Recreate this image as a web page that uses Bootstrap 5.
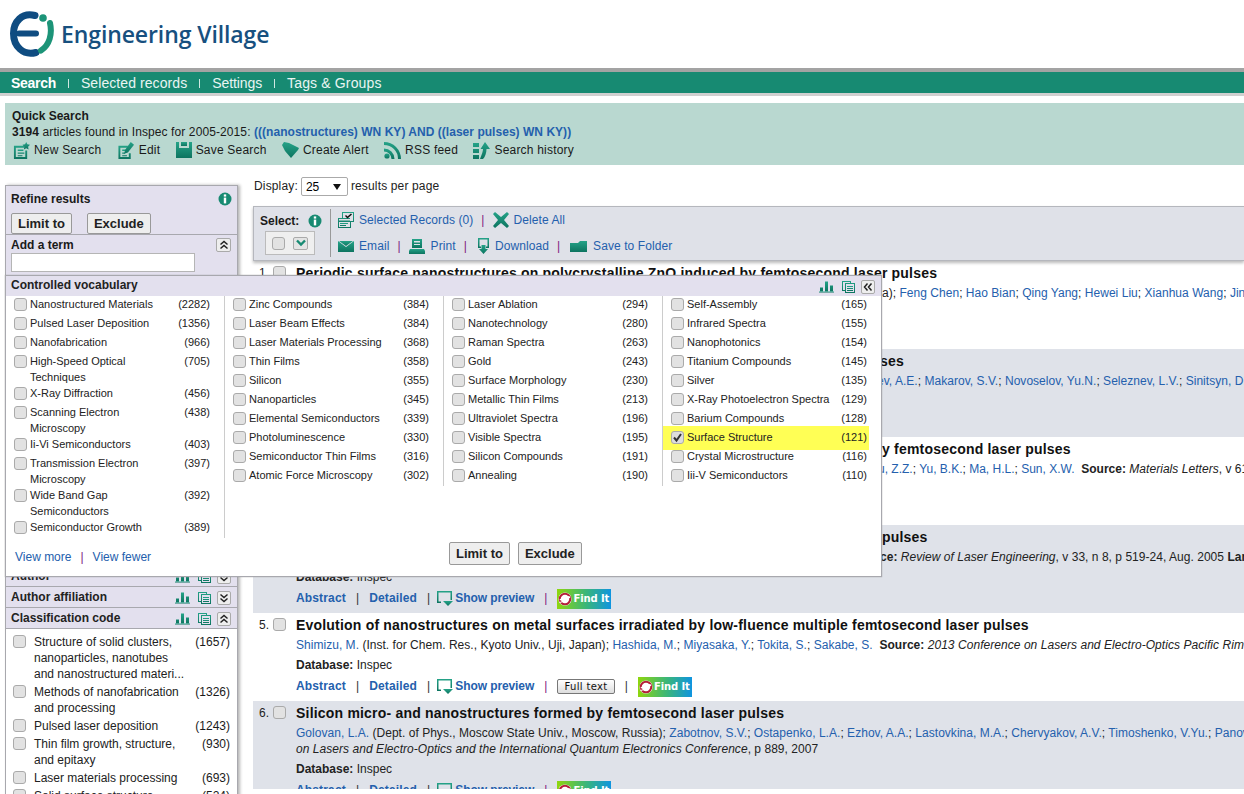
<!DOCTYPE html>
<html lang="en">
<head>
<meta charset="utf-8">
<title>Engineering Village</title>
<link href="https://cdn.jsdelivr.net/npm/bootstrap@5.3.0/dist/css/bootstrap.min.css" rel="stylesheet">
<style>
html,body{height:794px;overflow:hidden}
body{font-family:"Liberation Sans",Arial,sans-serif;font-size:12px;line-height:16px;color:#1a1a1a;background:#fff;position:relative}
a{color:#2460ad;text-decoration:none}
b{font-weight:700}
.defs{position:absolute;width:0;height:0}
.ic{fill:url(#tg);flex:none;display:block}
.logo-row{height:68px;padding:10px 0 0 8px}
.logo-word{font-family:"Open Sans",sans-serif;font-weight:600;font-size:23px;line-height:30px;color:#17507f;margin:9px 0 0 6px;letter-spacing:-.1px}
.top-nav{height:28px;border-top:4px solid #a3a3a3;border-bottom:3px solid #d0d0d0;background:#178a72;padding-left:11px;font-size:14px;line-height:20px;color:#fff}
.top-nav a{color:#e9f5f2;letter-spacing:.08px}
.top-nav a.on{color:#fff;font-weight:700;letter-spacing:-.3px}
.top-nav a.nav-set{letter-spacing:-.1px}
.top-nav a.nav-tag{letter-spacing:.15px}
.top-nav i{width:1px;height:9px;background:#cfe8e2;margin:1px 12px 0}
.qs{margin:7px 0 0 5px;height:62px;background:#b9d8d0;padding:5px 7px}
.qs a{font-weight:700}
.qs-line{letter-spacing:.1px}
.qs-line a{letter-spacing:.03px}
.qs-tools{height:22px;margin:-1px 0 0 1px;gap:15.4px;letter-spacing:.2px}
.qs-tools span{gap:4px}
.main{padding:12px 0 0 5px;gap:15px}
.side{width:233px;flex:none;margin-top:8px;height:640px;background:#fff;border:1px solid #a8a8ae;border-bottom:0;box-shadow:2px 0 3px #b5b5b5}
.sec{height:21px;background:#e3e0ee;border-bottom:1px solid #a8a8ae;padding:2px 6px 0 5px;font-weight:700;color:#222}
.sec-top{height:49px;background:#e3e0ee;border-bottom:1px solid #a8a8ae;padding:5px 5px 0}
.sec-add{height:331px;background:#e3e0ee;border-bottom:1px solid #a8a8ae;padding:2px 6px 0 5px;font-weight:700}
.sec-add input{display:block;width:184px;height:19px;border:1px solid #b5b5b5;margin-top:0;background:#fff}
.ev-btn{--bs-btn-padding-x:6px;--bs-btn-padding-y:0;--bs-btn-font-size:13px;--bs-btn-font-weight:700;--bs-btn-line-height:19px;--bs-btn-border-radius:2px;--bs-btn-color:#222;--bs-btn-bg:#eee;--bs-btn-border-color:#999}
.sec-top .ev-btn{margin-top:6px}
.btn-pair{gap:15px}
.ico-set{gap:8px;margin-left:auto;align-items:center}
.chev{width:15px;height:14px;border:1px solid #aaa;border-radius:2px;background:#eee;display:flex;align-items:center;justify-content:center;flex:none}
.ico-set .chev{margin-left:-2px;width:14px}
.chev svg{fill:none;stroke:#222;stroke-width:1.5}
.chev.pick{width:15px;height:13px;background:#e4e4e4}
.chev.pick svg{stroke:#178a72;stroke-width:2.4}
.cbx{appearance:none;width:13px;height:13px;border:1px solid #aaa;border-radius:3px;background:#e2e2e2;flex:none;margin:0;display:block}
.cbx:checked{background:#ddd url("data:image/svg+xml,%3Csvg xmlns='http://www.w3.org/2000/svg' viewBox='0 0 13 13'%3E%3Cpath d='M3 6.5l2.5 3L10 3' fill='none' stroke='%23333' stroke-width='2'/%3E%3C/svg%3E") center/13px no-repeat}
.cls-list{padding:5px 7px 0}
.cls-item{display:flex;margin-bottom:2px}
.cls-item .cbx{margin-top:1px}
.cls-item .nm{margin-left:8px;width:152px;flex:none;color:#222}
.cls-item .ct{margin-left:auto}
.results{flex:1;min-width:0}
.disp{height:19px;line-height:19px;margin:0 0 10px 1px;gap:3px;color:#222;letter-spacing:.15px}
.disp select{appearance:none;width:47px;height:19px;border:1px solid #aaa;border-radius:2px;padding:0 0 0 4px;font:12px "Liberation Sans",sans-serif;background:#fff url("data:image/svg+xml,%3Csvg xmlns='http://www.w3.org/2000/svg' viewBox='0 0 8 6'%3E%3Cpath d='M0 0h8L4 6z' fill='%23111'/%3E%3C/svg%3E") right 6px center/8px 6px no-repeat}
.tbar{height:55px;background:#dfe1e8;border:1px solid #b5b7bd;border-right:0;box-shadow:0 2px 3px #bbb;position:relative;z-index:1}
.sel-box{width:76px;padding:6px 0 0 6px;flex:none;font-weight:700}
.sel-head{gap:9px}
.sel-ctl{width:50px;height:24px;margin:2px 0 0 5px;background:#efefef;border:1px solid #bbb;gap:8px;align-items:center;justify-content:center}
.tb-sep{width:1px;height:48px;background:#999;margin-top:2px;flex:none}
.tb-links{padding-left:7px;letter-spacing:.08px}
.tb-row{height:26px;gap:5px;align-items:center}
.tb-row u{text-decoration:none;color:#80207f;margin:0 3px}
.tb-row .ic.pad-r{margin-right:1px}
.tb-row .ic.pad-l{margin-left:2px}
.tb-row .ic.pad-x{margin-left:2px;margin-right:1px}
.rec{height:88px;padding:0 0 0 6px;white-space:nowrap;overflow:hidden}
.rec.alt{background:#dfe2e9}
.rec-num{width:14px;flex:none;margin-top:3px;color:#222;padding-top:1px}
.rec-hd{width:23px;flex:none;padding-top:5px}
.rec-num,.rec-hd{display:block}
.rec-body{padding-top:3px;min-width:0}
.ttl{font-size:14px;line-height:18px;font-weight:700;color:#111;letter-spacing:.2px;height:18px}
.au{margin-top:3px;color:#222;letter-spacing:.03px}
.au.tight{letter-spacing:0}
.au i{letter-spacing:.05px}
.db{margin-top:4px;color:#222}
.lk{margin-top:5px;height:20px;align-items:flex-start;font-weight:700;letter-spacing:.15px}
.lk a{font-weight:700}
.lk u{text-decoration:none;color:#333;font-weight:400;margin:0 10px}
.lk u.pu{color:#80207f}
.hid{display:inline-block;overflow:hidden;vertical-align:bottom;white-space:nowrap}
.w584{width:584px}.w586{width:586px}.w581{width:581px}.w582{width:582px}
.lk a.prev{display:flex;gap:2px;align-items:center;margin-left:-3px;letter-spacing:-.1px}
.findit{width:54px;height:20px;margin-top:-1px;background:linear-gradient(90deg,#8fd60e 0,#39b57c 55%,#0f94e0 100%);color:#fff;font:700 10px/20px "DejaVu Sans",sans-serif;letter-spacing:-.1px;display:flex;align-items:center;padding-left:1px;gap:1px;flex:none}
.fulltext{height:15px;padding:0 6px;border:1px solid #777;border-radius:2px;background:linear-gradient(#fff,#ddd);font:10px/13px "DejaVu Sans",sans-serif;color:#111;margin-top:1px;font-weight:400;letter-spacing:.35px}
.pop{position:absolute;left:5px;top:275px;width:877px;height:302px;background:#fff;border:1px solid #a8a8ae;box-shadow:0 0 1px #999;z-index:5;font-size:11px;color:#222}
.pop-hd{height:20px;background:#e3e0ee;padding:1px 6px 0 5px;font-size:12px;font-weight:700}
.pop-hd .ico-set{margin-top:1px}
.pop-cols{height:242px}
.pcol{width:219px;padding:0 14px 0 8px;border-right:1px solid #ccc;height:190px;flex:none}
.pcol.one{height:242px}
.pcol.last{border-right:0;width:207px;padding-right:3px}
.pit{display:flex;padding-bottom:3px;line-height:16px}
.pit.two{padding-bottom:0}
.pit .cbx{margin:2px 3px 0 0}
.pit .nm{flex:1;min-width:0}
.pit .ct{margin-left:6px}
.pit.hl{background:#ffff55;margin:-3px -2px -2px -8px;padding:3px 2px 5px 8px}
.pop-ft{padding:4px 0 0 9px;font-size:12px}
.pop-links{width:434px;padding-top:7px}
.pop-links u{text-decoration:none;color:#80207f;margin:0 9px}
.pop-ft .ev-btn{margin-right:8px}
</style>
</head>
<body>
<svg class="defs" aria-hidden="true">
  <defs>
    <linearGradient id="tg" x1="0" y1="0" x2="0" y2="1"><stop offset="0" stop-color="#25a388"/><stop offset="1" stop-color="#0d7460"/></linearGradient>
  </defs>
  <symbol id="info" viewBox="0 0 14 14"><circle cx="7" cy="7" r="6.5" fill="#178a72"/><rect x="5.8" y="2.4" width="2.4" height="2.2" fill="#fff"/><rect x="5.8" y="5.6" width="2.4" height="5.8" fill="#fff"/></symbol>
  <symbol id="bars" viewBox="0 0 15 11"><path d="M1 6h3v4H1zM6 0h3v10H6zM11 4h3v6h-3z"/><path d="M0 10h15v1H0z"/></symbol>
  <symbol id="tbl" viewBox="0 0 13 12"><path d="M0 0h9v2h4v10H3v-2H0zM1 1v8h2V2h5V1zM4 3v8h8V3z" fill-rule="evenodd"/><path d="M5 5h6v1H5zM5 7h6v1H5zM5 9h6v1H5z"/></symbol>
  <symbol id="new" viewBox="0 0 18 18"><path d="M1 4h11v2H3v10h10V9h2v9H1z"/><path d="M5 8h6v1.500H5zM5 11h7v1.500H5zM5 14h5v1H5z"/><path d="M14 0l1.200 2.500L18 3l-2 2 .5 3-2.500-1.400L11.500 8l.5-3-2-2 2.800-.5z"/></symbol>
  <symbol id="edit" viewBox="0 0 18 18"><path d="M1 4h10v2H3v10h9v-4h2v6H1z"/><path d="M5 8h4v1.500H5zM5 11h3v1.500H5zM5 14h5v1H5z"/><path d="M14 0l3.500 3-6.500 8-4 1.500 1-4z"/></symbol>
  <symbol id="save" viewBox="0 0 16 16"><path d="M0 0h3v6h10V0h3v16H0z"/><path d="M5 0h6v4H5z"/></symbol>
  <symbol id="tag" viewBox="0 0 17 16"><path d="M0 3l2-3 5 1 10 5-1 2-7 8L3 9z"/></symbol>
  <symbol id="rss" viewBox="0 0 17 17"><circle cx="3" cy="14" r="2.600"/><path d="M0 6.500a10.500 10.500 0 0 1 10.500 10.500H7.500A7.500 7.500 0 0 0 0 9.500z"/><path d="M0 0a17 17 0 0 1 17 17h-3A14 14 0 0 0 0 3z"/></symbol>
  <symbol id="hist" viewBox="0 0 17 17"><path d="M0 1h6v4H0zM0 7h6v4H0zM0 13h6v4H0z"/><path d="M7 17C9 12 10 9 10 7H7.500L12 0l5 7h-3.500C13.500 11 12 15 10 17z"/></symbol>
  <symbol id="recs" viewBox="0 0 16 16"><path d="M0 6h4V0h12v10h-3v6H0zM5 1v5h7v3h3V1zM1 7v1.500h11V7zM1 10v5h11v-5z" fill-rule="evenodd"/><path d="M2 11h8v1H2zM2 13h6v1H2z"/><path d="M7 4l1-1 1.500 1.500L13 1.500l1 1-4.500 4z" fill="#111"/></symbol>
  <symbol id="del" viewBox="0 0 16 16"><path d="M0 2l2-2 6 5 6-5 2 2-5 6 5 6-2 2-6-5-6 5-2-2 5-6z"/></symbol>
  <symbol id="mail" viewBox="0 0 16 11"><path d="M0 0l8 6 8-6v11H0z"/><path d="M1 0h14L8 5z"/></symbol>
  <symbol id="prn" viewBox="0 0 16 15"><path d="M3 0h10v9H3zM5 2v1.500h6V2zM5 5v1h6V5z" fill-rule="evenodd"/><path d="M1 10h14l1 2v3H0v-3z"/></symbol>
  <symbol id="dl" viewBox="0 0 13 16"><path d="M1 0h11v10H9V8.500h1.500v-7h-8v7H4V10H1z"/><path d="M4.500 7h4v4H11l-4.500 5L2 11h2.500z"/></symbol>
  <symbol id="fld" viewBox="0 0 17 11"><path d="M0 2h8l2-2h7v11H0z"/></symbol>
  <symbol id="prv" viewBox="0 0 16 15"><path d="M0 0h15v9h-1.500V1.500h-12v9H4V12H0z"/><path d="M6 10h10l-5 5z"/></symbol>
  <symbol id="dup" viewBox="0 0 10 10"><path d="M1.500 4.500L5 1.500l3.500 3M1.500 8.500L5 5.500l3.500 3"/></symbol>
  <symbol id="ddn" viewBox="0 0 10 10"><path d="M1.500 1.500L5 4.500l3.500-3M1.500 5.500L5 8.500l3.500-3"/></symbol>
  <symbol id="dlf" viewBox="0 0 10 10"><path d="M4.500 1.500L1.500 5l3 3.500M8.500 1.500L5.500 5l3 3.500"/></symbol>
  <symbol id="sdn" viewBox="0 0 10 8"><path d="M1 1.500L5 5.500l4-4"/></symbol>
  <symbol id="sfx" viewBox="0 0 16 16"><circle cx="8" cy="8" r="7.500" fill="#fff"/><circle cx="8" cy="8" r="6" fill="none" stroke="#b5203a" stroke-width="2.400"/><path d="M2 9c4-1 7-6 12-3M2 12c5 0 8-5 12-6" fill="none" stroke="#fff" stroke-width="1.300"/></symbol>
</svg>

<header class="logo-row d-flex">
  <svg width="47" height="48" viewBox="0 0 47 48" aria-label="Ei logo">
    <path d="M27 5.500C14 2 5.500 12 5.500 23.500 5.500 36 15 46 28 42.500" fill="none" stroke="#0f4c81" stroke-width="7" stroke-linecap="round"/>
    <path d="M11 23.500h17" stroke="#0f4c81" stroke-width="6" stroke-linecap="round"/>
    <circle cx="35" cy="8" r="3.800" fill="#1c9478"/>
    <path d="M42 13c2.500 11-.5 22-9 27.500" fill="none" stroke="#1c9478" stroke-width="6" stroke-linecap="round"/>
  </svg>
  <div class="logo-word">Engineering Village</div>
</header>

<nav class="top-nav d-flex align-items-center">
  <a class="on" href="#">Search</a><i></i><a href="#">Selected records</a><i></i><a class="nav-set" href="#">Settings</a><i></i><a class="nav-tag" href="#">Tags &amp; Groups</a>
</nav>

<section class="qs">
  <div><b>Quick Search</b></div>
  <div class="qs-line"><b>3194</b> articles found in Inspec for 2005-2015: <a href="#">(((nanostructures) WN KY) AND ((laser pulses) WN KY))</a></div>
  <div class="qs-tools d-flex align-items-center">
    <span class="d-flex align-items-center"><svg class="ic" width="17" height="17"><use href="#new"/></svg>New Search</span>
    <span class="d-flex align-items-center"><svg class="ic" width="18" height="17"><use href="#edit"/></svg>Edit</span>
    <span class="d-flex align-items-center"><svg class="ic" width="16" height="16"><use href="#save"/></svg>Save Search</span>
    <span class="d-flex align-items-center"><svg class="ic" width="17" height="16"><use href="#tag"/></svg>Create Alert</span>
    <span class="d-flex align-items-center"><svg class="ic" width="17" height="17"><use href="#rss"/></svg>RSS feed</span>
    <span class="d-flex align-items-center"><svg class="ic" width="17" height="17"><use href="#hist"/></svg>Search history</span>
  </div>
</section>

<div class="main d-flex">
  <aside class="side">
    <div class="sec-top">
      <div class="d-flex align-items-center"><b>Refine results</b><svg class="ms-auto" width="14" height="14"><use href="#info"/></svg></div>
      <div class="d-flex btn-pair"><button class="btn ev-btn" type="button">Limit to</button><button class="btn ev-btn" type="button">Exclude</button></div>
    </div>
    <div class="sec-add">
      <div class="d-flex align-items-center">Add a term<span class="chev ms-auto"><svg width="10" height="10"><use href="#dup"/></svg></span></div>
      <input type="text" aria-label="Add a term">
    </div>
    <div class="sec d-flex">Author<span class="d-flex ico-set"><svg class="ic" width="15" height="12"><use href="#bars"/></svg><svg class="ic" width="13" height="12"><use href="#tbl"/></svg><span class="chev"><svg width="10" height="10"><use href="#ddn"/></svg></span></span></div>
    <div class="sec d-flex">Author affiliation<span class="d-flex ico-set"><svg class="ic" width="15" height="12"><use href="#bars"/></svg><svg class="ic" width="13" height="12"><use href="#tbl"/></svg><span class="chev"><svg width="10" height="10"><use href="#ddn"/></svg></span></span></div>
    <div class="sec d-flex">Classification code<span class="d-flex ico-set"><svg class="ic" width="15" height="12"><use href="#bars"/></svg><svg class="ic" width="13" height="12"><use href="#tbl"/></svg><span class="chev"><svg width="10" height="10"><use href="#dup"/></svg></span></span></div>
    <div class="cls-list">
      <div class="cls-item"><input class="cbx" type="checkbox" aria-label="select"><span class="nm">Structure of solid clusters, nanoparticles, nanotubes and nanostructured materi...</span><span class="ct">(1657)</span></div>
      <div class="cls-item"><input class="cbx" type="checkbox" aria-label="select"><span class="nm">Methods of nanofabrication and processing</span><span class="ct">(1326)</span></div>
      <div class="cls-item"><input class="cbx" type="checkbox" aria-label="select"><span class="nm">Pulsed laser deposition</span><span class="ct">(1243)</span></div>
      <div class="cls-item"><input class="cbx" type="checkbox" aria-label="select"><span class="nm">Thin film growth, structure, and epitaxy</span><span class="ct">(930)</span></div>
      <div class="cls-item"><input class="cbx" type="checkbox" aria-label="select"><span class="nm">Laser materials processing</span><span class="ct">(693)</span></div>
      <div class="cls-item"><input class="cbx" type="checkbox" aria-label="select"><span class="nm">Solid surface structure</span><span class="ct">(524)</span></div>
    </div>
  </aside>

  <main class="results">
    <div class="disp d-flex">Display: <select aria-label="Results per page"><option>25</option></select> results per page</div>
    <div class="tbar d-flex">
      <div class="sel-box">
        <div class="sel-head d-flex align-items-center">Select: <svg width="14" height="14"><use href="#info"/></svg></div>
        <div class="sel-ctl d-flex"><input class="cbx" type="checkbox" aria-label="select all"><span class="chev pick"><svg width="10" height="8"><use href="#sdn"/></svg></span></div>
      </div>
      <div class="tb-sep"></div>
      <div class="tb-links">
        <div class="tb-row d-flex"><svg class="ic" width="16" height="16"><use href="#recs"/></svg><a href="#">Selected Records (0)</a><u>|</u><svg class="ic" width="16" height="16"><use href="#del"/></svg><a href="#">Delete All</a></div>
        <div class="tb-row d-flex"><svg class="ic" width="16" height="11"><use href="#mail"/></svg><a href="#">Email</a><u>|</u><svg class="ic pad-r" width="16" height="15"><use href="#prn"/></svg><a href="#">Print</a><u>|</u><svg class="ic pad-l" width="13" height="16"><use href="#dl"/></svg><a href="#">Download</a><u>|</u><svg class="ic pad-x" width="17" height="11"><use href="#fld"/></svg><a href="#">Save to Folder</a></div>
      </div>
    </div>

    <article class="rec d-flex">
      <div class="rec-num">1.</div><div class="rec-hd"><input class="cbx" type="checkbox" aria-label="select"></div>
      <div class="rec-body">
        <div class="ttl">Periodic surface nanostructures on polycrystalline ZnO induced by femtosecond laser pulses</div>
        <div class="au"><span class="hid w586"><a href="#">Huang, Min</a> (School of Physics, Nankai University, Tianjin, China)</span>a); <a href="#">Feng Chen</a>; <a href="#">Hao Bian</a>; <a href="#">Qing Yang</a>; <a href="#">Hewei Liu</a>; <a href="#">Xianhua Wang</a>; <a href="#">Jinhai Si</a>; <a href="#">Xun Hou</a></div>
      </div>
    </article>
    <article class="rec alt d-flex">
      <div class="rec-num">2.</div><div class="rec-hd"><input class="cbx" type="checkbox" aria-label="select"></div>
      <div class="rec-body">
        <div class="ttl"><span class="hid w584">Formation of surface nanostructures on silicon by femtosecond laser pul</span>ses</div>
        <div class="au"><span class="hid w581"><a href="#">Ionin, A.A.</a>; <a href="#">Kudryashov, S.I.</a>; <a href="#">Ligachev, A.E.</a></span><a href="#">ev, A.E.</a>; <a href="#">Makarov, S.V.</a>; <a href="#">Novoselov, Yu.N.</a>; <a href="#">Seleznev, L.V.</a>; <a href="#">Sinitsyn, D.V.</a></div>
      </div>
    </article>
    <article class="rec d-flex">
      <div class="rec-num">3.</div><div class="rec-hd"><input class="cbx" type="checkbox" aria-label="select"></div>
      <div class="rec-body">
        <div class="ttl"><span class="hid w586">Surface nanostructures on ZnSe crystals induced b</span>y femtosecond laser pulses</div>
        <div class="au tight"><span class="hid w582"><a href="#">Jia, T.Q.</a>; <a href="#">Xu, Z.Z.</a></span><a href="#">u, Z.Z.</a>; <a href="#">Yu, B.K.</a>; <a href="#">Ma, H.L.</a>; <a href="#">Sun, X.W.</a> &nbsp;<b>Source:</b> <i>Materials Letters</i>, v 61, n 14, p 3015-17, 2007</div>
      </div>
    </article>
    <article class="rec alt d-flex">
      <div class="rec-num">4.</div><div class="rec-hd"><input class="cbx" type="checkbox" aria-label="select"></div>
      <div class="rec-body">
        <div class="ttl"><span class="hid w586">Periodic nanostructures on solids formed by femtosecond laser </span>pulses</div>
        <div class="au"><span class="hid w584"><a href="#">Shimotsuma, Y.</a>; <a href="#">Miura, K.</a> <b>Sour</b></span><b>ce:</b> <i>Review of Laser Engineering</i>, v 33, n 8, p 519-24, Aug. 2005 <b>Language:</b> Japanese</div>
        <div class="db"><b>Database:</b> Inspec</div>
        <div class="lk d-flex"><a href="#">Abstract</a><u>|</u><a href="#">Detailed</a><u>|</u><a class="prev" href="#"><svg class="ic" width="16" height="15"><use href="#prv"/></svg>Show preview</a><u class="pu">|</u><span class="findit"><svg width="14" height="14"><use href="#sfx"/></svg>Find It</span></div>
      </div>
    </article>
    <article class="rec d-flex">
      <div class="rec-num">5.</div><div class="rec-hd"><input class="cbx" type="checkbox" aria-label="select"></div>
      <div class="rec-body">
        <div class="ttl">Evolution of nanostructures on metal surfaces irradiated by low-fluence multiple femtosecond laser pulses</div>
        <div class="au"><a href="#">Shimizu, M.</a> (Inst. for Chem. Res., Kyoto Univ., Uji, Japan); <a href="#">Hashida, M.</a>; <a href="#">Miyasaka, Y.</a>; <a href="#">Tokita, S.</a>; <a href="#">Sakabe, S.</a> &nbsp;<b>Source:</b> <i>2013 Conference on Lasers and Electro-Optics Pacific Rim</i></div>
        <div class="db"><b>Database:</b> Inspec</div>
        <div class="lk d-flex"><a href="#">Abstract</a><u>|</u><a href="#">Detailed</a><u>|</u><a class="prev" href="#"><svg class="ic" width="16" height="15"><use href="#prv"/></svg>Show preview</a><u class="pu">|</u><span class="fulltext">Full text</span><u>|</u><span class="findit"><svg width="14" height="14"><use href="#sfx"/></svg>Find It</span></div>
      </div>
    </article>
    <article class="rec alt d-flex">
      <div class="rec-num">6.</div><div class="rec-hd"><input class="cbx" type="checkbox" aria-label="select"></div>
      <div class="rec-body">
        <div class="ttl">Silicon micro- and nanostructures formed by femtosecond laser pulses</div>
        <div class="au"><a href="#">Golovan, L.A.</a> (Dept. of Phys., Moscow State Univ., Moscow, Russia); <a href="#">Zabotnov, S.V.</a>; <a href="#">Ostapenko, L.A.</a>; <a href="#">Ezhov, A.A.</a>; <a href="#">Lastovkina, M.A.</a>; <a href="#">Chervyakov, A.V.</a>; <a href="#">Timoshenko, V.Yu.</a>; <a href="#">Panov, V.I.</a><br><i>on Lasers and Electro-Optics and the International Quantum Electronics Conference</i>, p 889, 2007</div>
        <div class="db"><b>Database:</b> Inspec</div>
        <div class="lk d-flex"><a href="#">Abstract</a><u>|</u><a href="#">Detailed</a><u>|</u><a class="prev" href="#"><svg class="ic" width="16" height="15"><use href="#prv"/></svg>Show preview</a><u class="pu">|</u><span class="findit"><svg width="14" height="14"><use href="#sfx"/></svg>Find It</span></div>
      </div>
    </article>
  </main>
</div>

<div class="pop">
  <div class="pop-hd d-flex">Controlled vocabulary<span class="d-flex ico-set"><svg class="ic" width="15" height="12"><use href="#bars"/></svg><svg class="ic" width="13" height="12"><use href="#tbl"/></svg><span class="chev"><svg width="10" height="10"><use href="#dlf"/></svg></span></span></div>
  <div class="pop-cols d-flex">
    <div class="pcol one">
      <label class="pit"><input class="cbx" type="checkbox"><span class="nm">Nanostructured Materials</span><span class="ct">(2282)</span></label>
      <label class="pit"><input class="cbx" type="checkbox"><span class="nm">Pulsed Laser Deposition</span><span class="ct">(1356)</span></label>
      <label class="pit"><input class="cbx" type="checkbox"><span class="nm">Nanofabrication</span><span class="ct">(966)</span></label>
      <label class="pit two"><input class="cbx" type="checkbox"><span class="nm">High-Speed Optical<br>Techniques</span><span class="ct">(705)</span></label>
      <label class="pit"><input class="cbx" type="checkbox"><span class="nm">X-Ray Diffraction</span><span class="ct">(456)</span></label>
      <label class="pit two"><input class="cbx" type="checkbox"><span class="nm">Scanning Electron<br>Microscopy</span><span class="ct">(438)</span></label>
      <label class="pit"><input class="cbx" type="checkbox"><span class="nm">Ii-Vi Semiconductors</span><span class="ct">(403)</span></label>
      <label class="pit two"><input class="cbx" type="checkbox"><span class="nm">Transmission Electron<br>Microscopy</span><span class="ct">(397)</span></label>
      <label class="pit two"><input class="cbx" type="checkbox"><span class="nm">Wide Band Gap<br>Semiconductors</span><span class="ct">(392)</span></label>
      <label class="pit"><input class="cbx" type="checkbox"><span class="nm">Semiconductor Growth</span><span class="ct">(389)</span></label>
    </div>
    <div class="pcol">
      <label class="pit"><input class="cbx" type="checkbox"><span class="nm">Zinc Compounds</span><span class="ct">(384)</span></label>
      <label class="pit"><input class="cbx" type="checkbox"><span class="nm">Laser Beam Effects</span><span class="ct">(384)</span></label>
      <label class="pit"><input class="cbx" type="checkbox"><span class="nm">Laser Materials Processing</span><span class="ct">(368)</span></label>
      <label class="pit"><input class="cbx" type="checkbox"><span class="nm">Thin Films</span><span class="ct">(358)</span></label>
      <label class="pit"><input class="cbx" type="checkbox"><span class="nm">Silicon</span><span class="ct">(355)</span></label>
      <label class="pit"><input class="cbx" type="checkbox"><span class="nm">Nanoparticles</span><span class="ct">(345)</span></label>
      <label class="pit"><input class="cbx" type="checkbox"><span class="nm">Elemental Semiconductors</span><span class="ct">(339)</span></label>
      <label class="pit"><input class="cbx" type="checkbox"><span class="nm">Photoluminescence</span><span class="ct">(330)</span></label>
      <label class="pit"><input class="cbx" type="checkbox"><span class="nm">Semiconductor Thin Films</span><span class="ct">(316)</span></label>
      <label class="pit"><input class="cbx" type="checkbox"><span class="nm">Atomic Force Microscopy</span><span class="ct">(302)</span></label>
    </div>
    <div class="pcol">
      <label class="pit"><input class="cbx" type="checkbox"><span class="nm">Laser Ablation</span><span class="ct">(294)</span></label>
      <label class="pit"><input class="cbx" type="checkbox"><span class="nm">Nanotechnology</span><span class="ct">(280)</span></label>
      <label class="pit"><input class="cbx" type="checkbox"><span class="nm">Raman Spectra</span><span class="ct">(263)</span></label>
      <label class="pit"><input class="cbx" type="checkbox"><span class="nm">Gold</span><span class="ct">(243)</span></label>
      <label class="pit"><input class="cbx" type="checkbox"><span class="nm">Surface Morphology</span><span class="ct">(230)</span></label>
      <label class="pit"><input class="cbx" type="checkbox"><span class="nm">Metallic Thin Films</span><span class="ct">(213)</span></label>
      <label class="pit"><input class="cbx" type="checkbox"><span class="nm">Ultraviolet Spectra</span><span class="ct">(196)</span></label>
      <label class="pit"><input class="cbx" type="checkbox"><span class="nm">Visible Spectra</span><span class="ct">(195)</span></label>
      <label class="pit"><input class="cbx" type="checkbox"><span class="nm">Silicon Compounds</span><span class="ct">(191)</span></label>
      <label class="pit"><input class="cbx" type="checkbox"><span class="nm">Annealing</span><span class="ct">(190)</span></label>
    </div>
    <div class="pcol last">
      <label class="pit"><input class="cbx" type="checkbox"><span class="nm">Self-Assembly</span><span class="ct">(165)</span></label>
      <label class="pit"><input class="cbx" type="checkbox"><span class="nm">Infrared Spectra</span><span class="ct">(155)</span></label>
      <label class="pit"><input class="cbx" type="checkbox"><span class="nm">Nanophotonics</span><span class="ct">(154)</span></label>
      <label class="pit"><input class="cbx" type="checkbox"><span class="nm">Titanium Compounds</span><span class="ct">(145)</span></label>
      <label class="pit"><input class="cbx" type="checkbox"><span class="nm">Silver</span><span class="ct">(135)</span></label>
      <label class="pit"><input class="cbx" type="checkbox"><span class="nm">X-Ray Photoelectron Spectra</span><span class="ct">(129)</span></label>
      <label class="pit"><input class="cbx" type="checkbox"><span class="nm">Barium Compounds</span><span class="ct">(128)</span></label>
      <label class="pit hl"><input class="cbx" type="checkbox" checked><span class="nm">Surface Structure</span><span class="ct">(121)</span></label>
      <label class="pit"><input class="cbx" type="checkbox"><span class="nm">Crystal Microstructure</span><span class="ct">(116)</span></label>
      <label class="pit"><input class="cbx" type="checkbox"><span class="nm">Iii-V Semiconductors</span><span class="ct">(110)</span></label>
    </div>
  </div>
  <div class="pop-ft d-flex">
    <div class="pop-links"><a href="#">View more</a><u>|</u><a href="#">View fewer</a></div>
    <button class="btn ev-btn" type="button">Limit to</button><button class="btn ev-btn" type="button">Exclude</button>
  </div>
</div>
<script src="https://cdn.jsdelivr.net/npm/bootstrap@5.3.0/dist/js/bootstrap.bundle.min.js"></script>
</body>
</html>
